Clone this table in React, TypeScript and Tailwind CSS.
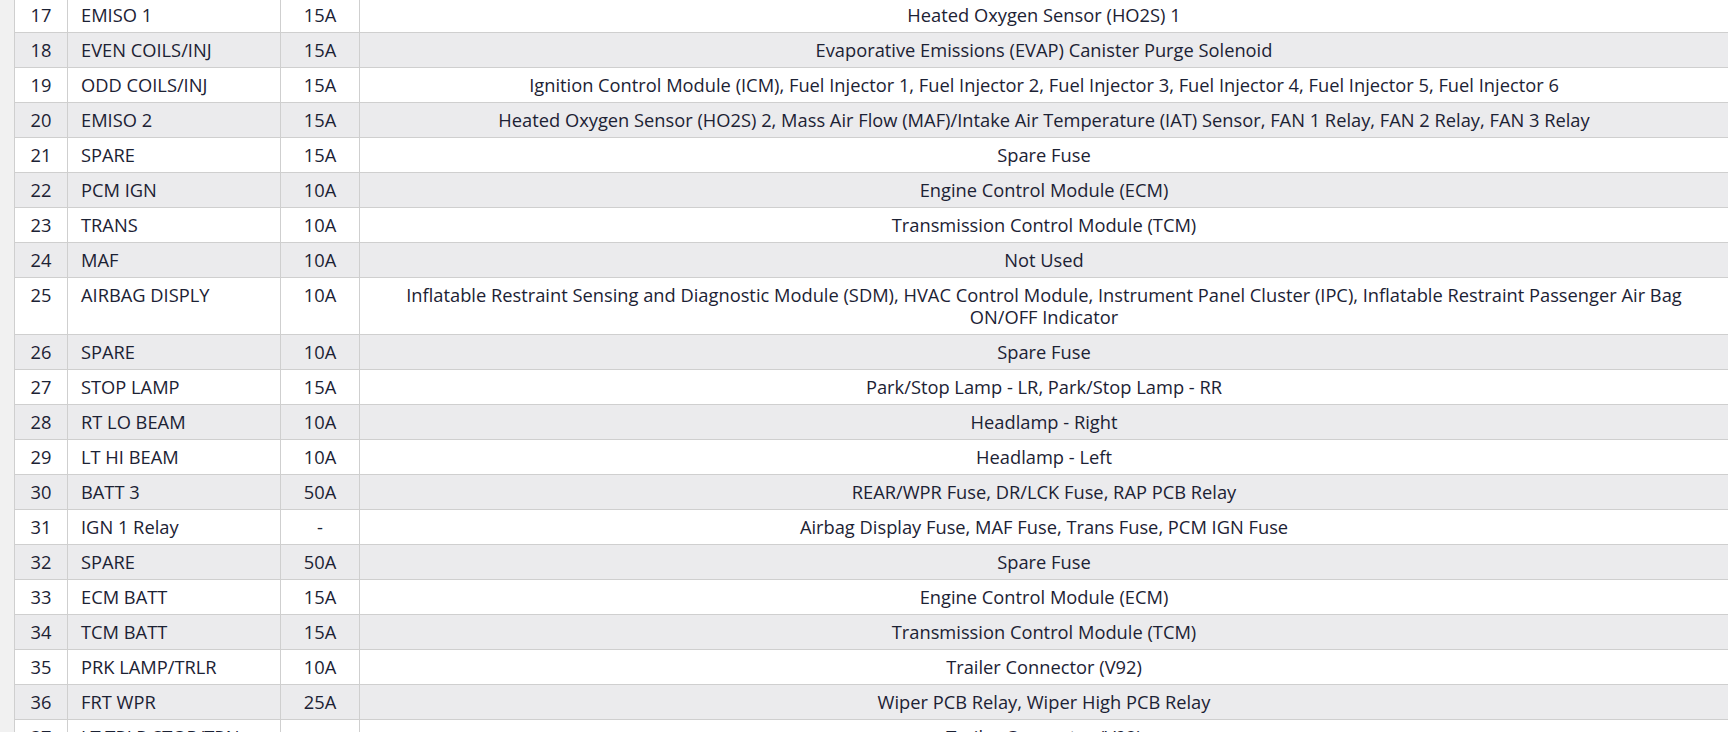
import React from "react";

const rows: [string, string, string, string][] = [
  ["17", "EMISO 1", "15A", "Heated Oxygen Sensor (HO2S) 1"],
  ["18", "EVEN COILS/INJ", "15A", "Evaporative Emissions (EVAP) Canister Purge Solenoid"],
  ["19", "ODD COILS/INJ", "15A", "Ignition Control Module (ICM), Fuel Injector 1, Fuel Injector 2, Fuel Injector 3, Fuel Injector 4, Fuel Injector 5, Fuel Injector 6"],
  ["20", "EMISO 2", "15A", "Heated Oxygen Sensor (HO2S) 2, Mass Air Flow (MAF)/Intake Air Temperature (IAT) Sensor, FAN 1 Relay, FAN 2 Relay, FAN 3 Relay"],
  ["21", "SPARE", "15A", "Spare Fuse"],
  ["22", "PCM IGN", "10A", "Engine Control Module (ECM)"],
  ["23", "TRANS", "10A", "Transmission Control Module (TCM)"],
  ["24", "MAF", "10A", "Not Used"],
  ["25", "AIRBAG DISPLY", "10A", "Inflatable Restraint Sensing and Diagnostic Module (SDM), HVAC Control Module, Instrument Panel Cluster (IPC), Inflatable Restraint Passenger Air Bag ON/OFF Indicator"],
  ["26", "SPARE", "10A", "Spare Fuse"],
  ["27", "STOP LAMP", "15A", "Park/Stop Lamp - LR, Park/Stop Lamp - RR"],
  ["28", "RT LO BEAM", "10A", "Headlamp - Right"],
  ["29", "LT HI BEAM", "10A", "Headlamp - Left"],
  ["30", "BATT 3", "50A", "REAR/WPR Fuse, DR/LCK Fuse, RAP PCB Relay"],
  ["31", "IGN 1 Relay", "-", "Airbag Display Fuse, MAF Fuse, Trans Fuse, PCM IGN Fuse"],
  ["32", "SPARE", "50A", "Spare Fuse"],
  ["33", "ECM BATT", "15A", "Engine Control Module (ECM)"],
  ["34", "TCM BATT", "15A", "Transmission Control Module (TCM)"],
  ["35", "PRK LAMP/TRLR", "10A", "Trailer Connector (V92)"],
  ["36", "FRT WPR", "25A", "Wiper PCB Relay, Wiper High PCB Relay"],
  ["37", "LT TRLR STOP/TRN", "-", "Trailer Connector (V92)"],
];

export default function App() {
  return (
    <div
      className="flex w-[1728px] h-[732px] overflow-hidden bg-white text-[#1c2234] text-[18.3px] leading-[22px]"
      style={{ fontFamily: '"Open Sans", "Noto Sans", sans-serif' }}
    >
      <div className="w-[14px] shrink-0 bg-[#f1f1f1]" />
      <div className="flex-1 -mt-[2px]">
        <table className="w-full border-collapse border-l border-[#cfcfcf]">
          <colgroup>
            <col className="w-[53px]" />
            <col className="w-[213px]" />
            <col className="w-[79px]" />
            <col />
          </colgroup>
          <tbody>
            {rows.map((r, i) => (
              <tr key={r[0]} className={i % 2 === 1 ? "bg-[#ebebed]" : "bg-white"}>
                <td className="border-b border-r border-[#cfcfcf] py-[6px] text-center align-top">{r[0]}</td>
                <td className="border-b border-r border-[#cfcfcf] py-[6px] pl-[13px] pr-[8px] text-left align-top whitespace-nowrap">{r[1]}</td>
                <td className="border-b border-r border-[#cfcfcf] py-[6px] text-center align-top">{r[2]}</td>
                <td className="border-b border-[#cfcfcf] py-[6px] px-[30px] text-center align-top">{r[3]}</td>
              </tr>
            ))}
          </tbody>
        </table>
      </div>
    </div>
  );
}
